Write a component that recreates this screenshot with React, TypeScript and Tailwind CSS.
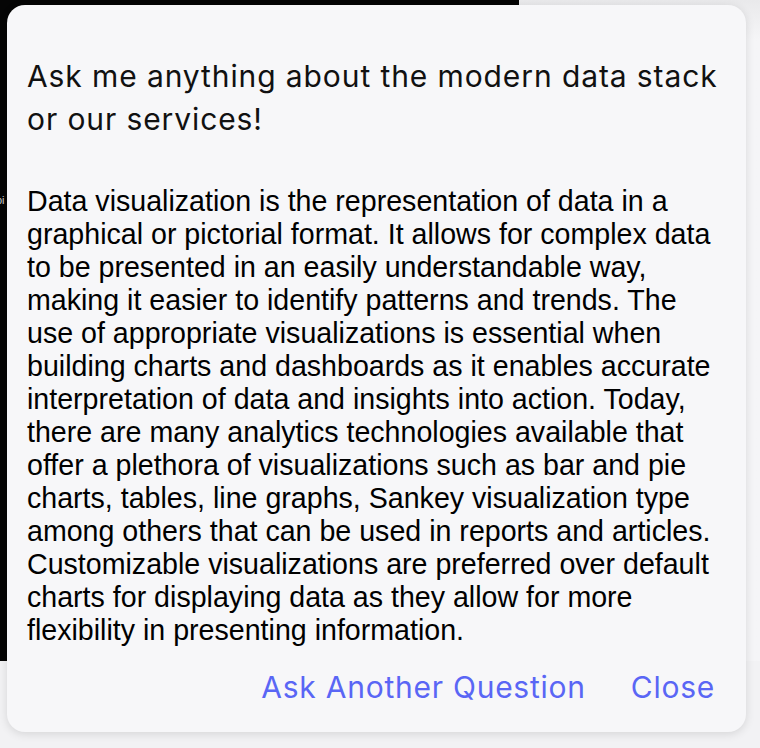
import React from 'react';

const answer =
  'Data visualization is the representation of data in a graphical or pictorial format. It allows for complex data to be presented in an easily understandable way, making it easier to identify patterns and trends. The use of appropriate visualizations is essential when building charts and dashboards as it enables accurate interpretation of data and insights into action. Today, there are many analytics technologies available that offer a plethora of visualizations such as bar and pie charts, tables, line graphs, Sankey visualization type among others that can be used in reports and articles. Customizable visualizations are preferred over default charts for displaying data as they allow for more flexibility in presenting information.';

export default function App() {
  return (
    <div className="relative w-[760px] h-[748px] overflow-hidden bg-[#f2f2f4]">
      {/* page behind the modal */}
      <div className="flex">
        <div className="w-[519px] h-[661px] bg-[#050505] pt-[186px]">
          <span className="text-[11px] text-[#cfcfcf] font-['Liberation_Sans',sans-serif] -ml-[4px]">pi</span>
        </div>
        <div className="flex-1 h-[661px] bg-gradient-to-b from-[#e9e9eb] to-[#f5f5f7] to-[6%]" />
      </div>

      <div className="absolute left-[7px] top-[5px] w-[739px] h-[727px] rounded-[18px] bg-[#f7f7f9] shadow-[0_2px_10px_rgba(0,0,0,0.12)] flex flex-col px-[20px] pt-[50px] pb-[26px]">
        <h2 className="font-['Inter',sans-serif] text-[30px] leading-[43px] tracking-[0.03em] text-[#111] font-normal">
          Ask me anything about the modern data stack or our services!
        </h2>
        <p className="mt-[44px] pr-[4px] font-['Liberation_Sans',sans-serif] text-[28.6px] leading-[33px] text-black">
          {answer}
        </p>
        <div className="mt-auto flex justify-end gap-[45px] pr-[11px] font-['Inter',sans-serif] text-[30px] leading-[38px] tracking-[0.025em] text-[#5a66f5]">
          <button>Ask Another Question</button>
          <button>Close</button>
        </div>
      </div>
    </div>
  );
}
